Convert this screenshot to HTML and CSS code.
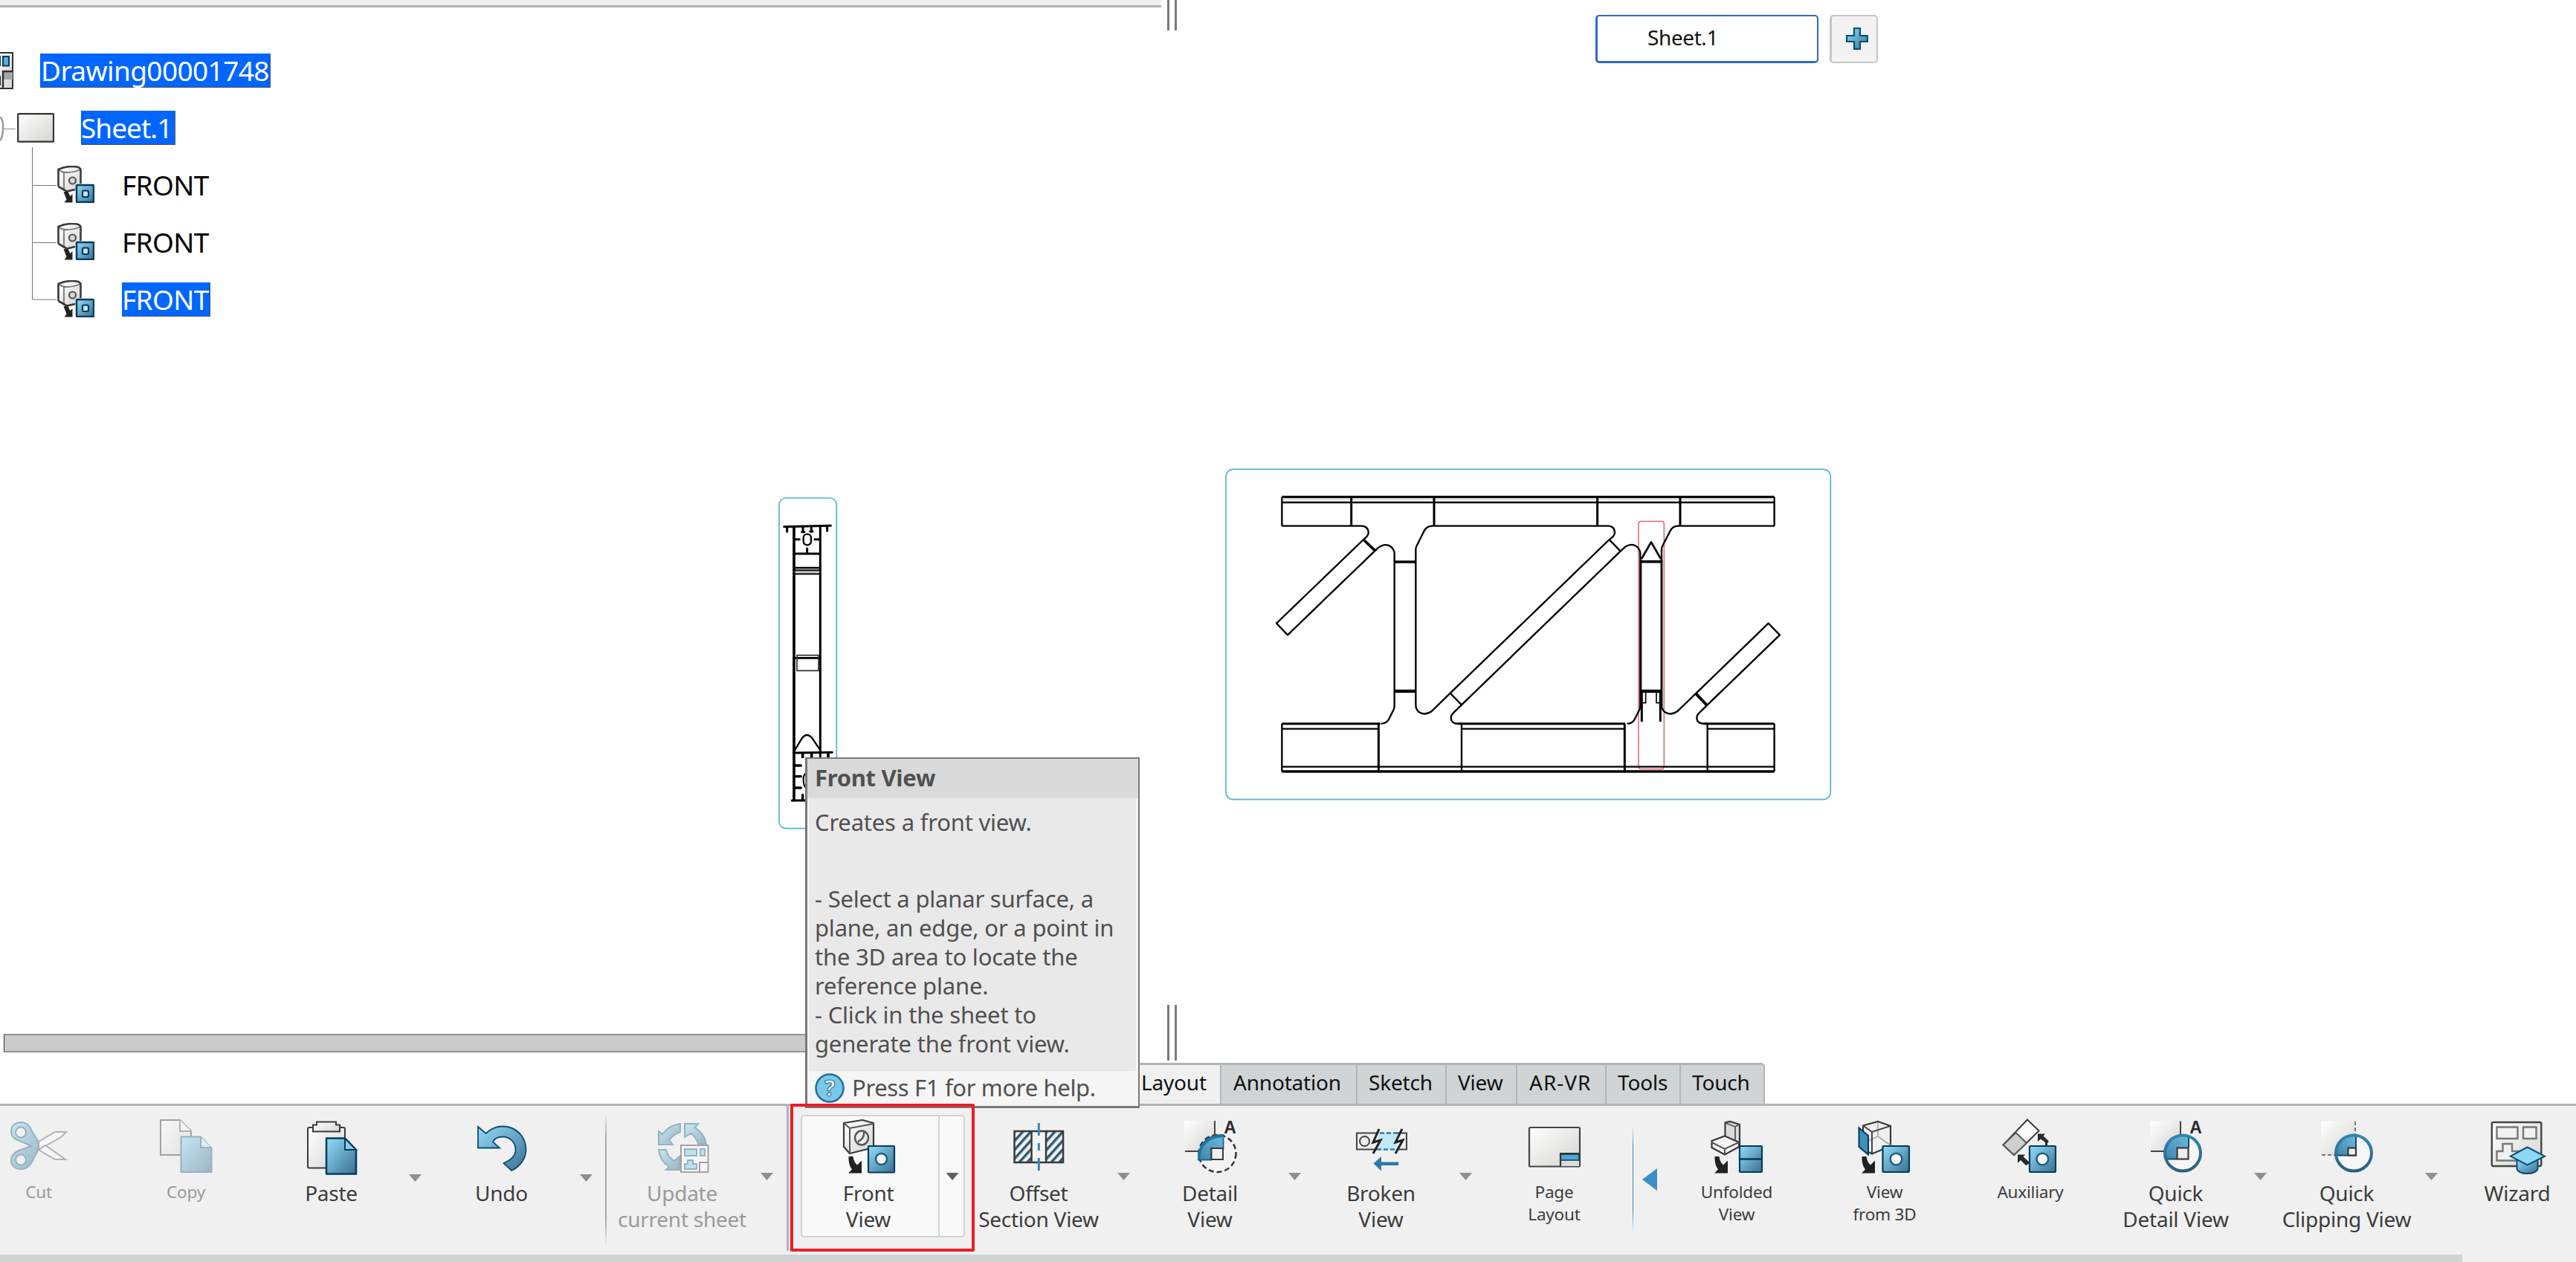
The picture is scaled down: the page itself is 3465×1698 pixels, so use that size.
FILE: index.html
```html
<!DOCTYPE html>
<html lang="en">
<head>
<meta charset="utf-8">
<title>Drawing00001748</title>
<link rel="stylesheet" href="styles.css">
</head>
<body>
<svg class="sprites" width="0" height="0" aria-hidden="true">
  <defs>
    <linearGradient id="blue" x1="0" y1="0" x2="1" y2="1"><stop offset="0" stop-color="#93dcfb"/><stop offset="1" stop-color="#3a6f90"/></linearGradient>
    <linearGradient id="metal" x1="0" y1="0" x2="1" y2="1"><stop offset="0" stop-color="#ffffff"/><stop offset="1" stop-color="#d4d4d2"/></linearGradient>
    <linearGradient id="ring" x1="0" y1="0" x2="0" y2="1"><stop offset="0" stop-color="#2f86b0"/><stop offset="1" stop-color="#2a5f80"/></linearGradient>
    <linearGradient id="quarter" x1="1" y1="0" x2="0" y2="1"><stop offset="0" stop-color="#6cbce0"/><stop offset="1" stop-color="#3f82aa"/></linearGradient>
    <pattern id="hatch" width="8" height="8" patternUnits="userSpaceOnUse" patternTransform="rotate(42)"><rect width="8" height="8" fill="#f2f4f5"/><rect width="3.500" height="8" fill="#2e5a75"/></pattern>
  </defs>
  <symbol id="down-arrow" viewBox="0 0 20 24"><path d="M1.500 1H7.500Q8.500 9 13 12.500L19 6.500V23.500H1L6 18.500Q1 12 1.500 1z" fill="#222"/></symbol>
  <symbol id="tree-view" viewBox="0 0 50 50">
    <path d="M1.500 6Q10 1 18 1L32 4V30L12 35L1.500 28z" fill="url(#metal)"/>
    <path d="M9 9V34M1.500 5Q6 9 12 9Q24 9 31 5" fill="none" stroke="#777" stroke-width="1.800"/>
    <path d="M1.500 28V5Q10 1 20 1T31.500 5V24M1.500 28L13 34.500L24 32" fill="none" stroke="#3a3a3a" stroke-width="2.600"/>
    <circle cx="20.500" cy="20" r="4.500" fill="#d8d8d8" stroke="#555" stroke-width="2.200"/>
    <path d="M8.500 35h6l3 6 3-3v11.500H9.500l3-4z" fill="#222"/>
    <rect x="26" y="26" width="23" height="23" rx="1" fill="url(#blue)" stroke="#003c5c" stroke-width="2.500"/>
    <rect x="34" y="33.500" width="8" height="8.500" rx="2" fill="#cfe3ec" stroke="#003c5c" stroke-width="2.200"/>
  </symbol>
</svg>

<div class="app">
  <main class="workspace">
    <section class="tree-panel">
      <div class="panel-edge"></div>
      <div class="tree">
        <div class="row row-root">
          <svg class="root-icon" width="18" height="50" viewBox="0 0 18 50"><path d="M-5 1H17V49H-5z" fill="url(#metal)" stroke="#333" stroke-width="2"/><rect x="4" y="6" width="8" height="12.500" fill="#5bb0d6" stroke="#003c5c" stroke-width="2"/><path d="M0 5V19M0 32V45" stroke="#003c5c" stroke-width="2"/><rect x="5" y="27" width="12" height="10" fill="#a5a5a5"/><path d="M17 26H4V49" fill="none" stroke="#333" stroke-width="2.500"/></svg>
          <span class="label selected">Drawing00001748</span>
        </div>
        <div class="row row-sheet">
          <svg class="sheet-icon" width="73" height="42" viewBox="0 0 73 42"><path d="M-2 5Q5 6 4 22T-2 37" fill="none" stroke="#9a9a9a" stroke-width="2.500"/><path d="M5 21.500H21" stroke="#8a8a8a"/><rect x="24.200" y="1.200" width="47.800" height="37.500" rx="1" fill="url(#metal)" stroke="#333" stroke-width="2.200"/></svg>
          <span class="label selected">Sheet.1</span>
        </div>
        <div class="row row-view"><svg width="50" height="50"><use href="#tree-view"/></svg><span class="label">FRONT</span></div>
        <div class="row row-view"><svg width="50" height="50"><use href="#tree-view"/></svg><span class="label">FRONT</span></div>
        <div class="row row-view"><svg width="50" height="50"><use href="#tree-view"/></svg><span class="label selected">FRONT</span></div>
        <svg class="connectors" width="34" height="206" viewBox="0 0 34 206"><path d="M.5 0V205H33M.5 51.500H33M.5 128.500H33" fill="none" stroke="#777"/></svg>
      </div>
      <div class="scrollbar"></div>
    </section>
    <div class="splitter"><i></i><i></i></div>
    <section class="sheet-panel">
      <div class="sheet-tabs">
        <div class="sheet-tab">Sheet.1</div>
        <div class="sheet-add"><svg width="30" height="30" viewBox="0 0 30 30"><path d="M11 1h8v10h10v8H19v10h-8V19H1v-8h10z" fill="url(#blue)" stroke="#00507c" stroke-width="2.200"/></svg></div>
      </div>
    </section>

    <svg class="side-view" width="120" height="480" viewBox="0 0 360 1440">
      <rect x="54" y="60" width="232" height="1334" rx="28" fill="none" stroke="#52b2d8" stroke-width="5"/>
      <g fill="none" stroke="#000" stroke-linecap="round">
        <path d="M74 176L262 172" stroke-width="9"/>
        <path d="M86 176V196M248 176V193" stroke-width="9"/>
        <path d="M150 176V196M184 176V196" stroke-width="9"/>
        <path d="M146 197H156M179 195H189" stroke-width="9"/>
        <path d="M114 176V1280" stroke-width="11"/>
        <path d="M220 176V1110" stroke-width="9"/>
        <rect x="152" y="206" width="31" height="44" rx="15" stroke-width="7"/>
        <path d="M118 227H136M198 227H218M167 264V282" stroke-width="9"/>
        <path d="M114 285H220" stroke-width="9"/>
        <path d="M114 342H220" stroke-width="7"/>
        <path d="M114 352H220M114 367H220" stroke-width="6"/>
        <path d="M114 359H220" stroke-width="3" stroke="#777"/>
        <path d="M114 706H220" stroke-width="8"/>
        <path d="M126 695H213V757H126z" stroke-width="5" stroke="#333"/>
        <path d="M116 1080L146 1030Q166 1004 188 1030L220 1078" stroke-width="7"/>
        <path d="M112 1089L268 1087" stroke-width="9"/>
        <path d="M149 1089V1110M185 1089V1110M252 1089V1110" stroke-width="11" stroke-linecap="butt"/>
        <path d="M118 1140H142M118 1184H142M118 1230H142M149 1258V1280" stroke-width="10"/>
        <path d="M160 1172Q151 1180 152 1200T160 1228" stroke-width="6"/>
        <path d="M106 1281H170" stroke-width="9"/>
      </g>
    </svg>

    <svg class="main-view" width="840" height="470" viewBox="0 0 2520 1410">
      <rect x="27" y="34" width="2440" height="1333" rx="29" fill="none" stroke="#52b2d8" stroke-width="5"/>
      <g fill="none" stroke="#d9565a" stroke-width="4"><rect x="1692" y="244" width="103" height="1000" rx="10"/></g>
      <g fill="none" stroke="#000" stroke-width="7" stroke-linejoin="round">
        <path d="M253 146H2240" stroke-width="10"/>
        <path d="M253 168H2240M253 263V146M2240 146V263"/>
        <path d="M253 157H2240" stroke="#aaa" stroke-width="2"/>
        <path d="M533 146V263M867 146V263M1526 146V263M1860 146V263" stroke-width="9"/>
        <path d="M253 263H572Q602 263 602 292Q602 303 582 318L231 656L276 703L640 352Q668 330 692 346Q707 358 707 375V990Q707 1003 700 1012L684 1044Q674 1061 653 1061"/>
        <path d="M1572 263H860Q838 263 827 283L796 345Q793 350 793 360V985Q793 1004 806 1014Q830 1030 856 1012L932 938L1574 318"/>
        <path d="M1572 263Q1596 266 1596 290Q1596 303 1574 318M1619 365L1640 346Q1668 330 1687 348Q1699 360 1699 375V990Q1699 1003 1692 1012L1676 1044Q1667 1061 1646 1061"/>
        <path d="M1619 365L978 985L944 1018Q930 1032 938 1050Q946 1061 962 1061H978"/>
        <path d="M2240 263H1852Q1830 263 1820 283L1788 345Q1785 350 1785 360V985Q1785 1004 1798 1014Q1822 1030 1848 1012L2216 656L2262 703L1936 1018Q1922 1032 1930 1050Q1938 1061 1954 1061H1970"/>
        <path d="M582 318L628 362M707 408H793" stroke-width="11"/>
        <path d="M707 930H793" stroke-width="13"/>
        <path d="M932 938L978 985M1574 318L1619 365"/>
        <path d="M1922 938L1968 987" stroke-width="12"/>
        <path d="M253 1061H650M962 1061H1638M1954 1061H2240" stroke-width="9"/>
        <path d="M253 1082H642M978 1082H1636M1970 1082H2240M253 1235H2240"/>
        <path d="M253 1254H2240" stroke-width="10"/>
        <path d="M253 1061V1254M978 1061V1254M1970 1061V1254M2240 1061V1254"/>
        <path d="M643 1061V1254M1636 1061V1254" stroke-width="9"/>
        <path d="M1704 396L1743 328L1782 396" stroke-width="8"/>
        <path d="M1699 407H1787" stroke-width="11"/>
        <path d="M1701 400V990M1785 400V990" stroke-width="8"/>
        <path d="M1701 930H1786" stroke-width="13"/>
        <path d="M1705 930V1053M1780 930V1053" stroke-width="9"/>
        <path d="M1721 930V977H1708M1764 930V977H1780" stroke-width="5"/>
      </g>
    </svg>
  </main>

  <nav class="tabs">
    <div class="tab tab-layout active">Layout</div>
    <div class="tab tab-annotation">Annotation</div>
    <div class="tab tab-sketch">Sketch</div>
    <div class="tab tab-view">View</div>
    <div class="tab tab-arvr">AR-VR</div>
    <div class="tab tab-tools">Tools</div>
    <div class="tab tab-touch">Touch</div>
  </nav>

  <div class="toolbar">
    <div class="group group-edit">
      <div class="tool small disabled w-cut">
        <svg class="icon" viewBox="0 0 80 80"><g stroke="#666" stroke-width="2" fill="#fff"><path d="M40 32L62 19H77L70 26L40 43z"/><path d="M40 43L62 56H76L49 37z"/></g><path fill="url(#blue)" fill-rule="evenodd" stroke="#2c6787" stroke-width="2" d="M16 6C24 6 28 11 30 16L40 33V42L30 61C27 66 23 69 16 69C8 69 3 64 3 57C3 48 12 44 19 42L30 38L19 33C11 30 3 27 3 19C3 11 8 6 16 6zM16 12.500A7 7 0 1 0 16 26.500A7 7 0 1 0 16 12.500M16 49.500A7 7 0 1 0 16 63.500A7 7 0 1 0 16 49.500"/></svg>
        <span>Cut</span>
      </div>
      <div class="tool small disabled w-copy">
        <svg class="icon" viewBox="0 0 80 80"><path d="M6 3H32L47 18V50H6z" fill="url(#metal)" stroke="#444" stroke-width="2"/><path d="M32 3V18H47" fill="#fff" stroke="#666" stroke-width="2"/><path d="M33.500 25.500H60L74.500 41V73H33.500z" fill="url(#blue)" stroke="#2c6787" stroke-width="2"/><path d="M60 25.500V40H74" fill="#c5e8f6" stroke="#2c6787" stroke-width="2"/></svg>
        <span>Copy</span>
      </div>
      <div class="tool w-paste">
        <svg class="icon" viewBox="0 0 80 80"><rect x="8" y="13" width="50" height="54.500" rx="2" fill="url(#metal)" stroke="#3a3a3a" stroke-width="2"/><path d="M15 18.500V9.500H20V5.500H46V9.500H51V18.500z" fill="url(#metal)" stroke="#3a3a3a" stroke-width="2"/><path d="M33 27.500H58L73 43V75.500H33z" fill="url(#blue)" stroke="#003c5c" stroke-width="2.500" stroke-linejoin="round"/><path d="M58 27.500V43H73z" fill="#86cdec" stroke="#003c5c" stroke-width="2"/></svg>
        <span>Paste</span>
      </div>
      <div class="drop low w-paste-drop"></div>
      <div class="tool w-undo">
        <svg class="icon" viewBox="0 0 80 80"><path d="M8 12L18.500 21C25 15 32 11.500 41 11.500C59 11.500 72.500 25 72.500 43C72.500 55 64 66 53 71L42.500 61C52 57 58.500 51 58.500 43C58.500 32 50 25.500 41 25.500C35 25.500 30 28 28 32.500L37 40.500H8z" fill="url(#blue)" stroke="#0c4c72" stroke-width="1.800"/></svg>
        <span>Undo</span>
      </div>
      <div class="drop low w-undo-drop"></div>
    </div>

    <div class="group group-update">
      <div class="tool disabled w-update">
        <svg class="icon" viewBox="0 0 80 80"><g fill="url(#blue)" stroke="#2c6787" stroke-width="2"><path d="M37 8V19Q27 23 22 30L27 36H8V18L13 22Q22 10 37 8z"/><path d="M43 8H61L57 13Q70 22 72 35H61Q58 25 51 21L43 26z"/><path d="M8 43H18Q20 53 29 58L36 52V70H18L22 66Q10 58 8 43z"/></g><rect x="38" y="37" width="36.500" height="36" fill="#fff" stroke="#444" stroke-width="2"/><path d="M43 42H59V51H43zM64 42H70V51H64zM43 69V62H47V57H54V62H59V69z" fill="#86cdec" stroke="#2c6787" stroke-width="2"/><path d="M74 60H63V73" fill="none" stroke="#444" stroke-width="2"/></svg>
        <span>Update<br>current sheet</span>
      </div>
      <div class="drop w-update-drop"></div>
    </div>

    <div class="group group-views">
      <div class="split">
        <div class="tool">
          <svg class="icon" viewBox="0 0 80 80"><path d="M6 7L31 3L46 7V40L14 48L6 39z" fill="url(#metal)" stroke="#3a3a3a" stroke-width="2.200" stroke-linejoin="round"/><path d="M6 7L14 14L46 8M14 14V48" fill="none" stroke="#555" stroke-width="2"/><ellipse cx="30" cy="27" rx="9" ry="9.500" fill="#eee" stroke="#555" stroke-width="2.500"/><path d="M33 19Q34 28 25 32" fill="none" stroke="#555" stroke-width="2.500"/><use href="#down-arrow" x="11" y="51" width="20" height="24"/><rect x="39" y="38" width="35" height="35.500" rx="1" fill="url(#blue)" stroke="#003c5c" stroke-width="2.200"/><circle cx="56.500" cy="55.500" r="7.500" fill="#fff" stroke="#1d5f85" stroke-width="2.500"/></svg>
          <span>Front<br>View</span>
        </div>
        <div class="drop"></div>
      </div>
      <div class="tool w-offset">
        <svg class="icon" viewBox="0 0 80 80"><rect x="6" y="17.500" width="66" height="43" rx="2" fill="#f4f4f4"/><rect x="6.500" y="18" width="23" height="42" fill="url(#hatch)"/><rect x="49" y="18" width="23" height="42" fill="url(#hatch)"/><path d="M6.500 18H72V60H6.500zM29.500 18V60M49 18V60" fill="none" stroke="#3a3a3a" stroke-width="2.500"/><path d="M39.300 7V24M39.300 34V44M39.300 54V71" stroke="#2f8ab5" stroke-width="3"/></svg>
        <span>Offset<br>Section View</span>
      </div>
      <div class="drop w-offset-drop"></div>
      <div class="tool w-detail">
        <svg class="icon" viewBox="0 0 80 80"><rect x="5" y="4" width="41" height="41" fill="url(#metal)"/><circle cx="49.500" cy="48" r="25" fill="#f3f3f3"/><circle cx="49.500" cy="48" r="25" fill="none" stroke="#333" stroke-width="2.500" stroke-dasharray="7 4"/><path d="M46 4V24M6 45H25" stroke="#444" stroke-width="2"/><path d="M24 56.500C23 38 34 22.500 57.500 23V41H41V56.500z" fill="url(#quarter)" stroke="#17648f" stroke-width="1.800"/><path d="M25 54C25 38 36 25 56 24.500" fill="none" stroke="#1f76a4" stroke-width="3.500"/><rect x="41.500" y="41" width="15.500" height="15" fill="#eee" stroke="#3a3a3a" stroke-width="2"/><text x="66.500" y="20.500" class="glyph">A</text></svg>
        <span>Detail<br>View</span>
      </div>
      <div class="drop w-detail-drop"></div>
      <div class="tool w-broken">
        <svg class="icon" viewBox="0 0 80 80"><rect x="7" y="20.500" width="67" height="22" fill="#eee" stroke="#444" stroke-width="2"/><rect x="36" y="19" width="26" height="25" fill="#c2e8f8"/><path d="M38 20.500H62M34 42.500H60" stroke="#2a7fa8" stroke-width="2.500" stroke-dasharray="6 3"/><circle cx="17.500" cy="31.500" r="6.500" fill="none" stroke="#444" stroke-width="2"/><path d="M37 15L29 33L39 30L29 48M68 15L59 33L69 30L59 48" fill="none" stroke="#222" stroke-width="3"/><path d="M29.500 61.500L40 52V59.500H63V64H40V71.500z" fill="#2c7ba5"/></svg>
        <span>Broken<br>View</span>
      </div>
      <div class="drop w-broken-drop"></div>
      <div class="tool small w-page">
        <svg class="icon" viewBox="0 0 80 80"><rect x="6" y="13" width="68" height="52.500" rx="1.500" fill="url(#metal)" stroke="#444" stroke-width="2.200"/><rect x="48" y="48" width="25" height="17" fill="#dcdcdc"/><rect x="48" y="49" width="25" height="8" fill="#55a6cd" stroke="#003c5c" stroke-width="1.500"/><path d="M73 48H48V65" fill="none" stroke="#333" stroke-width="2.200"/></svg>
        <span>Page<br>Layout</span>
      </div>
    </div>

    <div class="group group-more">
      <svg class="collapse" width="20" height="30" viewBox="0 0 20 30"><path d="M20 0V30L0 15z" fill="#3a8fc8"/></svg>
      <div class="tool small w-unfolded">
        <svg class="icon" viewBox="0 0 80 80"><path d="M24.500 30V6.500L31 5L44 9V38L26 32z" fill="#dcdcdc" stroke="#3a3a3a" stroke-width="2.200"/><path d="M25 7L38 12V34M38 12L44 9" fill="none" stroke="#555" stroke-width="1.800"/><path d="M6.500 31L24 24.500L43 33V39L24 49.500L6.500 40z" fill="#f6f6f6" stroke="#3a3a3a" stroke-width="2.200"/><path d="M6.500 33L24 42L43 33M24 42V49" fill="none" stroke="#555" stroke-width="2"/><use href="#down-arrow" x="9" y="51" width="20" height="24"/><rect x="44" y="38" width="30" height="35" rx="1" fill="url(#blue)" stroke="#003c5c" stroke-width="2.200"/><path d="M44 55.500H74" stroke="#003c5c" stroke-width="2.500"/></svg>
        <span>Unfolded<br>View</span>
      </div>
      <div class="tool small w-from3d">
        <svg class="icon" viewBox="0 0 80 80"><path d="M11 10.500L31 5L48 11V38L23 48.500L11 42z" fill="#efefef" stroke="#3a3a3a" stroke-width="2.200"/><path d="M31 6V25L18 31M31 25L48 37" fill="none" stroke="#aaa" stroke-width="1.800"/><path d="M11 10.500L23 19L48 11M23 19V48" fill="none" stroke="#444" stroke-width="2"/><path d="M5.500 13.500L18 24V49.500L5.500 39z" fill="#3d90ba" stroke="#003c5c" stroke-width="2"/><use href="#down-arrow" x="8" y="51" width="20" height="24"/><rect x="37.500" y="38" width="35.500" height="35" rx="1" fill="url(#blue)" stroke="#003c5c" stroke-width="2.200"/><circle cx="55.500" cy="55.500" r="7.800" fill="#fff" stroke="#1d5f85" stroke-width="2.500"/></svg>
        <span>View<br>from 3D</span>
      </div>
      <div class="tool small w-auxiliary">
        <svg class="icon" viewBox="0 0 80 80"><path d="M36 2.500L51.500 17.500L18 50L3.500 36.500z" fill="#fafafa" stroke="#3a3a3a" stroke-width="2"/><path d="M20.500 20L35 34L18 50L3.500 36.500z" fill="#cfcfcf" stroke="#555" stroke-width="2"/><path d="M50 21.500H60L57.500 24.500L65 31.500L63 34V38H60V33L54 28.500L50 32z" fill="#2a2a2a"/><path d="M23 49.500H33L30.500 52.500L38 59V62L34 64L27 57L23 61z" fill="#2a2a2a"/><rect x="39" y="38" width="35" height="35" rx="1" fill="url(#blue)" stroke="#003c5c" stroke-width="2.200"/><circle cx="56.300" cy="55.500" r="7.800" fill="#fff" stroke="#1d5f85" stroke-width="2.500"/></svg>
        <span>Auxiliary</span>
      </div>
      <div class="tool w-qdetail">
        <svg class="icon" viewBox="0 0 80 80"><rect x="5" y="4.500" width="41" height="41" fill="url(#metal)"/><path d="M46 4.500V24M6 45H25" stroke="#444" stroke-width="2"/><circle cx="49" cy="47.500" r="24" fill="#f6f6f6"/><path d="M49 23.500H57V40H41V55.500H25C24 38 34 24 49 23.500z" fill="url(#quarter)"/><path d="M57 24V40M41 55.500H26" stroke="#0f4b6e" stroke-width="2"/><circle cx="49" cy="47.500" r="24" fill="none" stroke="url(#ring)" stroke-width="4"/><rect x="41.500" y="40.500" width="15" height="15" fill="#eee" stroke="#3a3a3a" stroke-width="2.200"/><text x="66.500" y="20.500" class="glyph">A</text></svg>
        <span>Quick<br>Detail View</span>
      </div>
      <div class="drop w-qdetail-drop"></div>
      <div class="tool w-qclip">
        <svg class="icon" viewBox="0 0 80 80"><rect x="5" y="4.500" width="46" height="46" fill="url(#metal)"/><path d="M51 5V24M6 50H25" stroke="#777" stroke-width="2" stroke-dasharray="5 3"/><circle cx="49" cy="47.500" r="24" fill="#f6f6f6"/><path d="M49 23.500H52V50.500H25C24 38 34 24 49 23.500z" fill="url(#quarter)"/><path d="M52 24V50.500H26" fill="none" stroke="#0f4b6e" stroke-width="2"/><circle cx="49" cy="47.500" r="24" fill="none" stroke="url(#ring)" stroke-width="4"/><rect x="41.500" y="40.500" width="10.500" height="10" fill="#eee" stroke="#3a3a3a" stroke-width="2.200"/></svg>
        <span>Quick<br>Clipping View</span>
      </div>
      <div class="drop w-qclip-drop"></div>
      <div class="tool w-wizard">
        <svg class="icon" viewBox="0 0 80 80"><rect x="4.800" y="6" width="66.500" height="59" rx="2" fill="url(#metal)" stroke="#444" stroke-width="2.400"/><path d="M11.500 12.500H39.500V28H11.500zM47 12.500H64.500V28H47zM11.500 57.500V45H19.500V35H32V45H42V57.500z" fill="#f1f1f1" stroke="#777" stroke-width="2.400"/><path d="M38.500 56V69Q41 75 52.500 75T66.500 69V56z" fill="url(#blue)" stroke="#0c4c72" stroke-width="2"/><path d="M30 51.700L52.500 39.500L76 51.700L52.500 63.300z" fill="#8ed7f5" stroke="#0c4c72" stroke-width="2"/></svg>
        <span>Wizard</span>
      </div>
    </div>
  </div>
  <div class="status"><div class="status-fill"></div></div>

  <aside class="tooltip">
    <h1>Front View</h1>
    <div class="tooltip-body">
      <p>Creates a front view.</p>
      <p class="steps">- Select a planar surface, a<br>plane, an edge, or a point in<br>the 3D area to locate the<br>reference plane.<br>- Click in the sheet to<br>generate the front view.</p>
    </div>
    <div class="tooltip-help">
      <svg width="40" height="40" viewBox="0 0 40 40"><circle cx="20" cy="20" r="18.500" fill="#7cc8e8" stroke="#1b6f9c" stroke-width="2.500"/><text x="20" y="31" class="question">?</text></svg>
      <span>Press F1 for more help.</span>
    </div>
  </aside>
  <div class="highlight"></div>
</div>
</body>
</html>
```
FILE: styles.css
```css
* { box-sizing: border-box; }

body {
  margin: 0;
  background: #fff;
  font-family: "Noto Sans", "Open Sans", sans-serif;
  color: #3c3c3c;
}

svg { display: block; flex: none; }
.sprites { position: absolute; }

.app {
  position: relative;
  display: flex;
  flex-direction: column;
  width: 3465px;
  height: 1698px;
  overflow: hidden;
  background: #fff;
}

/* Workspace: specification tree, splitter, drawing sheet */
.workspace {
  position: relative;
  display: flex;
  height: 1430px;
}
.tree-panel {
  display: flex;
  flex-direction: column;
  width: 1570px;
}
.panel-edge {
  width: 1562px;
  height: 10px;
  background: #f0f0f0;
  border-bottom: 3px solid #b1b3b6;
}
.tree {
  position: relative;
  flex: 1;
  padding-top: 62px;
}
.row {
  display: flex;
  align-items: flex-start;
  height: 77px;
}
.label {
  height: 46px;
  font-size: 37px;
  line-height: 45px;
  letter-spacing: -0.6px;
  color: #000;
  white-space: nowrap;
}
.label.selected {
  color: #fff;
  background: #0066ff;
  border-right: 1px solid #555;
  border-bottom: 1px solid #555;
}
.root-icon { margin: -2px 36px 0 0; }
.row-root .label { padding-left: 1px; padding-right: 1px; }
.sheet-icon { margin: 3px 36px 0 0; }
.row-sheet .label { padding-right: 4px; letter-spacing: -1px; }
.row-view { padding-left: 77px; }
.row-view svg { margin: -3px 37px 0 0; }
.row-view .label { padding-right: 1px; }
.connectors { position: absolute; left: 43px; top: 188px; }
.scrollbar {
  width: 1520px;
  height: 25px;
  margin: 0 0 14px 5px;
  background: #cbcbcb;
  border: solid #939393;
  border-width: 2px 0;
  border-left: 1px solid #333;
}
.splitter {
  display: flex;
  flex-direction: column;
  justify-content: space-between;
  width: 13px;
  padding-bottom: 3px;
}
.splitter i {
  height: 75px;
  border: solid #7a7a7a;
  border-width: 0 3px;
}
.splitter i:first-child { height: 41px; }
.sheet-panel { flex: 1; }
.sheet-tabs {
  display: flex;
  gap: 15px;
  padding: 20px 0 0 563px;
}
.sheet-tab {
  width: 300px;
  height: 65px;
  padding-left: 67px;
  font-size: 28px;
  line-height: 57px;
  letter-spacing: -0.4px;
  color: #111;
  background: #fff;
  border: 3px solid #3369c4;
  border-width: 2px 2px 3px 3px;
  border-radius: 5px;
}
.sheet-add {
  width: 65px;
  height: 65px;
  padding: 15px 0 0 19px;
  background: #f2f2f2;
  border: 2px solid #c5c5c5;
  border-left-width: 3px;
  border-radius: 5px;
}

/* Views placed on the sheet canvas */
.side-view { position: absolute; left: 1030px; top: 650px; }
.main-view { position: absolute; left: 1640px; top: 620px; }

/* Section tabs */
.tabs {
  display: flex;
  height: 55px;
  padding-left: 1521px;
}
.tab {
  padding-left: 15px;
  font-size: 28px;
  line-height: 47px;
  letter-spacing: -0.2px;
  color: #111;
  background: #d0d4d5;
  border-top: 3px solid #b3b4b8;
  border-right: 2px solid #b3b4b8;
}
.tab.active { background: #f0f0f0; }
.tab-layout { width: 122px; padding-left: 14px; }
.tab-annotation { width: 183px; padding-left: 16px; }
.tab-sketch { width: 120px; }
.tab-view { width: 95px; }
.tab-arvr { width: 120px; padding-left: 16px; letter-spacing: 1px; }
.tab-tools { width: 100px; }
.tab-touch { width: 113px; border-top-right-radius: 5px; }

/* Action bar */
.toolbar {
  display: flex;
  height: 203px;
  background: #f0f0f0;
  border-top: 3px solid #b3b4b8;
}
.group { display: flex; }
.group-edit {
  width: 816px;
  background: linear-gradient(transparent, #a8a8ac 20%, #a8a8ac 80%, transparent) 100% 8px / 2px 180px no-repeat;
}
.group-update { width: 245px; margin-bottom: 5px; border-right: 3px solid #b3b4b8; }
.group-views { width: 1135px; padding-left: 16px; }
.group-more {
  flex: 1;
  background: linear-gradient(transparent, #3a8fc0 20%, #3a8fc0 80%, transparent) 0 26px / 1px 144px no-repeat;
}
.tool {
  display: flex;
  flex: none;
  flex-direction: column;
  align-items: center;
  padding-top: 16px;
}
.icon { width: 80px; height: 80px; }
.tool span {
  margin-top: 4px;
  margin-left: -1px;
  font-size: 28px;
  line-height: 35px;
  letter-spacing: -0.25px;
  text-align: center;
  white-space: nowrap;
}
.tool.small span {
  margin-top: 5px;
  margin-left: 0;
  font-size: 22.6px;
  line-height: 30px;
}
.disabled .icon { opacity: 0.45; }
.disabled span { color: #9a9a9a; }

.drop {
  display: flex;
  flex: none;
  justify-content: center;
  padding-top: 90px;
}
.drop.low { padding-top: 92px; }
.drop::before {
  content: "";
  flex: none;
  width: 17px;
  height: 10px;
  background: #8f8f8f;
  clip-path: polygon(0 0, 100% 0, 50% 100%);
}

.split {
  display: flex;
  width: 221px;
  height: 165px;
  margin-top: 12px;
  background: #f9f9f9;
  border: 2px solid #cfd4d4;
  border-radius: 5px;
}
.split .tool { width: 185px; padding: 2px 4px 0 0; border-right: 2px solid #cfd4d4; }
.split .drop { width: 34px; padding-top: 76px; }
.split .drop::before { background: #606060; }

.w-cut { width: 104px; }
.w-copy { width: 292px; }
.w-paste { width: 100px; }
.w-paste-drop { width: 125px; }
.w-undo { width: 108px; }
.w-undo-drop { width: 51px; margin-left: 34px; }
.w-update { width: 204px; }
.w-update-drop { width: 23px; }
.w-offset { width: 189px; margin-left: 5px; }
.w-offset-drop { width: 39px; }
.w-detail { width: 194px; }
.w-detail-drop { width: 33px; }
.w-broken { width: 200px; }
.w-broken-drop { width: 27px; }
.w-page { width: 211px; }
.collapse { margin: 84px 7px 0 13px; }
.w-unfolded { width: 200px; }
.w-from3d { width: 198px; }
.w-auxiliary { width: 194px; }
.w-qdetail { width: 198px; }
.w-qdetail-drop { width: 29px; }
.w-qclip { width: 204px; }
.w-qclip-drop { width: 23px; }
.w-wizard { width: 157px; margin-left: 26px; }

.glyph {
  font: bold 23px "Liberation Sans", sans-serif;
  fill: #2a2a2a;
  text-anchor: middle;
}

.status {
  height: 10px;
  background: #f0f0f0;
}
.status-fill {
  width: 3312px;
  height: 10px;
  background: #d0d4d5;
}

/* Tooltip over the workspace */
.tooltip {
  position: absolute;
  left: 1083px;
  top: 1019px;
  display: flex;
  flex-direction: column;
  width: 450px;
  height: 472px;
  font-size: 31px;
  line-height: 39px;
  letter-spacing: -0.2px;
  color: #505050;
  background: #f5f5f5;
  border: solid #787878;
  border-width: 2px 2px 3px 3px;
}
.tooltip h1 {
  height: 53px;
  margin: 0;
  padding: 6px 0 0 10px;
  font-size: 31px;
  line-height: 39px;
  font-weight: 700;
  letter-spacing: -0.3px;
  background: #dadada;
}
.tooltip-body {
  height: 367px;
  margin: 0 3px 0 2px;
  padding: 13px 0 0 8px;
  background: #e9e9e9;
}
.tooltip p { margin: 0; white-space: nowrap; }
.tooltip .steps { margin-top: 64px; }
.tooltip-help {
  display: flex;
  gap: 10px;
  padding: 3px 0 0 10px;
  letter-spacing: -0.35px;
}
.question {
  font: bold 30px "Noto Sans", sans-serif;
  fill: #fff;
  stroke: #2b7aa5;
  stroke-width: 1.200px;
  text-anchor: middle;
}

.highlight {
  position: absolute;
  left: 1063px;
  top: 1485px;
  width: 248px;
  height: 199px;
  border: 4px solid #ed1c24;
  border-radius: 2px;
}
```
